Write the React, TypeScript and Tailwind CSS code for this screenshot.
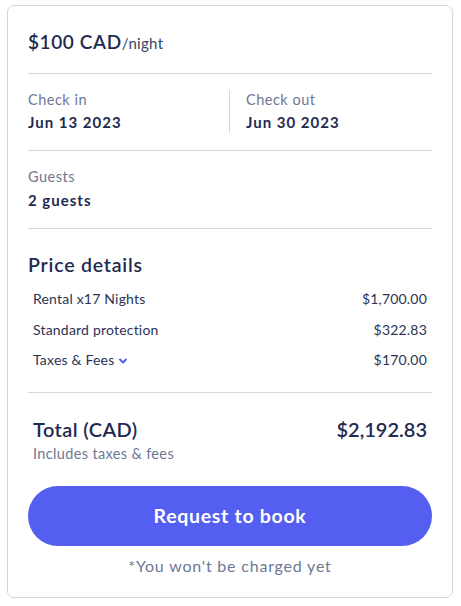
import React from "react";

function Row({ label, value, chevron }: { label: string; value: string; chevron?: boolean }) {
  return (
    <div className="flex items-center justify-between text-[14px] leading-[20px] text-[#2b3454] tracking-[0.2px]">
      <span className="flex items-center gap-[4px]">
        {label}
        {chevron && (
          <svg width="10" height="10" viewBox="0 0 10 10" className="mt-[1px]">
            <path d="M2 3.5 L5 6.5 L8 3.5" fill="none" stroke="#545ef0" strokeWidth="2" strokeLinecap="round" strokeLinejoin="round" />
          </svg>
        )}
      </span>
      <span>{value}</span>
    </div>
  );
}

export default function App() {
  return (
    <div className="bg-white w-[461px] h-[606px] pt-[5px] pl-[7px]" style={{ fontFamily: "Lato, 'Noto Sans', sans-serif" }}>
      <div className="w-[446px] h-[593px] border border-[#d6d6e2] rounded-[7px] px-5 flex flex-col text-[#1f2a50]">
        <div className="pt-[24px] pb-[18px] border-b border-[#d5d7e0] leading-[24px]">
          <span className="text-[19px] font-semibold tracking-[0.6px]">$100 CAD</span>
          <span className="text-[15px] text-[#3a4363] tracking-[0.3px]">/night</span>
        </div>
        <div className="pt-[16px] pb-[17px] border-b border-[#d5d7e0] flex">
          <div className="w-[202px] border-r border-[#d5d7e0]">
            <div className="text-[14.5px] leading-[20px] text-[#6e7793] tracking-[0.5px]">Check in</div>
            <div className="text-[15px] leading-[22px] font-bold mt-[1px] tracking-[1px]">Jun 13 2023</div>
          </div>
          <div className="pl-[16px]">
            <div className="text-[14.5px] leading-[20px] text-[#6e7793] tracking-[0.5px]">Check out</div>
            <div className="text-[15px] leading-[22px] font-bold mt-[1px] tracking-[1px]">Jun 30 2023</div>
          </div>
        </div>
        <div className="pt-[16px] pb-[17px] border-b border-[#d5d7e0]">
          <div className="text-[14.5px] leading-[20px] text-[#6e7793] tracking-[0.5px]">Guests</div>
          <div className="text-[15px] leading-[22px] font-bold mt-[2px] tracking-[1px]">2 guests</div>
        </div>
        <div className="pt-[24px] pb-[21.5px] border-b border-[#d5d7e0]">
          <div className="text-[19.5px] leading-[24px] font-semibold tracking-[0.8px]">Price details</div>
          <div className="mt-[12px] px-[5px] flex flex-col gap-[10.5px]">
            <Row label="Rental x17 Nights" value="$1,700.00" />
            <Row label="Standard protection" value="$322.83" />
            <Row label="Taxes & Fees" value="$170.00" chevron />
          </div>
        </div>
        <div className="pt-[23px] px-[5px]">
          <div className="flex justify-between text-[20px] leading-[26px] font-semibold">
            <span className="tracking-[0.4px]">Total (CAD)</span>
            <span>$2,192.83</span>
          </div>
          <div className="text-[14.5px] leading-[20px] text-[#6e7793] mt-[2px] tracking-[0.35px]">Includes taxes &amp; fees</div>
        </div>
        <button className="mt-[22px] h-[60px] w-full rounded-full bg-[#545ef0] text-white text-[19.5px] font-bold tracking-[0.7px]">
          Request to book
        </button>
        <div className="mt-[10px] text-center text-[16px] leading-[20px] text-[#6e7793] tracking-[0.8px]">*You won't be charged yet</div>
      </div>
    </div>
  );
}
